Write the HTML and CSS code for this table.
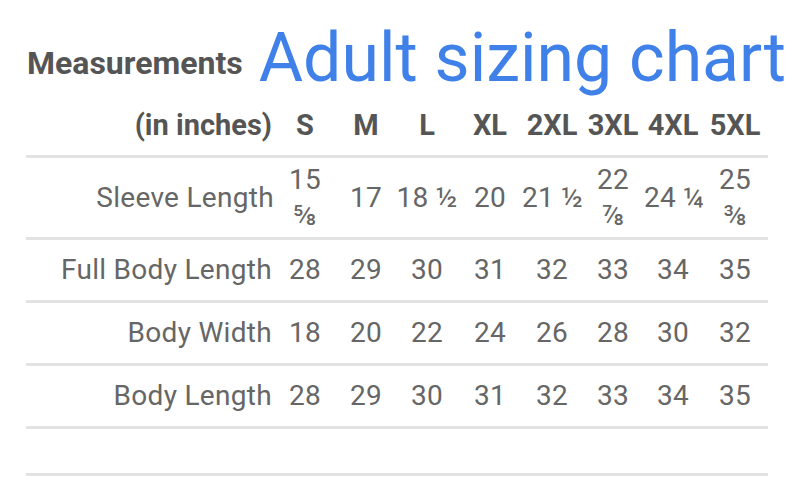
FILE: index.html
```html
<!DOCTYPE html>
<html lang="en">
<head>
<meta charset="utf-8">
<title>Adult sizing chart</title>
<link rel="stylesheet" href="styles.css">
</head>
<body>
<div class="chart">
  <div class="title-row">
    <span class="caption">Measurements</span>
    <h1 class="headline">Adult sizing chart</h1>
  </div>
  <table class="sizes">
    <colgroup>
      <col class="c-label">
      <col class="c-s">
      <col class="c-m">
      <col class="c-l">
      <col class="c-xl">
      <col class="c-2xl">
      <col class="c-3xl">
      <col class="c-4xl">
      <col class="c-5xl">
    </colgroup>
    <thead>
      <tr>
        <th class="label">(in inches)</th>
        <th>S</th><th>M</th><th>L</th><th>XL</th><th>2XL</th><th>3XL</th><th>4XL</th><th>5XL</th>
      </tr>
    </thead>
    <tbody>
      <tr class="tall">
        <td class="label">Sleeve Length</td>
        <td>15<span class="frac block">⅝</span></td>
        <td>17</td>
        <td>18 <span class="frac">½</span></td>
        <td>20</td>
        <td>21 <span class="frac">½</span></td>
        <td>22<span class="frac block">⅞</span></td>
        <td>24 <span class="frac">¼</span></td>
        <td>25<span class="frac block">⅜</span></td>
      </tr>
      <tr>
        <td class="label">Full Body Length</td>
        <td>28</td><td>29</td><td>30</td><td>31</td><td>32</td><td>33</td><td>34</td><td>35</td>
      </tr>
      <tr>
        <td class="label">Body Width</td>
        <td>18</td><td>20</td><td>22</td><td>24</td><td>26</td><td>28</td><td>30</td><td>32</td>
      </tr>
      <tr>
        <td class="label">Body Length</td>
        <td>28</td><td>29</td><td>30</td><td>31</td><td>32</td><td>33</td><td>34</td><td>35</td>
      </tr>
      <tr class="empty">
        <td class="label">&nbsp;</td>
        <td></td><td></td><td></td><td></td><td></td><td></td><td></td><td></td>
      </tr>
    </tbody>
  </table>
</div>
</body>
</html>
```

FILE: styles.css
```css
html, body {
  margin: 0;
  padding: 0;
  background: #ffffff;
}

body {
  font-family: Roboto, "Liberation Sans", sans-serif;
  color: #666666;
}

.chart {
  width: 742px;
  padding-left: 26px;
}

.title-row {
  display: flex;
  align-items: flex-start;
  gap: 16px;
  height: 100px;
  box-sizing: border-box;
  padding-top: 24px;
  padding-left: 1px;
}

.caption {
  margin-top: 21px;
  font-size: 32px;
  font-weight: 700;
  color: #555555;
  line-height: 36px;
  white-space: nowrap;
}

.headline {
  margin: 0;
  font-size: 68px;
  font-weight: 400;
  line-height: 68px;
  color: #3f81e9;
  white-space: nowrap;
}

.sizes {
  width: 742px;
  table-layout: fixed;
  border-collapse: collapse;
  border-spacing: 0;
}

.c-label { width: 248px; }
.c-s { width: 62px; }
.c-m { width: 60px; }
.c-l { width: 62px; }
.c-xl { width: 64px; }
.c-2xl { width: 60px; }
.c-3xl { width: 62px; }
.c-4xl { width: 58px; }
.c-5xl { width: 66px; }

.sizes th,
.sizes td {
  border-bottom: 3px solid #e3e3e3;
  text-align: center;
  vertical-align: middle;
  line-height: 36px;
  padding: 12px 0;
  white-space: nowrap;
}

.sizes th {
  font-size: 29px;
  font-weight: 700;
  color: #555555;
  padding: 7px 0 12px;
}

.sizes td {
  font-size: 28px;
  font-weight: 400;
  letter-spacing: 0.3px;
  color: #666666;
}

.sizes .label {
  text-align: right;
  padding-right: 2px;
}

.sizes .tall td {
  padding: 4px 0 3px;
}

.sizes .empty td {
  padding: 4px 0;
}

.frac {
  font-size: 28px;
  letter-spacing: 0;
}

.frac.block {
  display: block;
  line-height: 36px;
}
```
